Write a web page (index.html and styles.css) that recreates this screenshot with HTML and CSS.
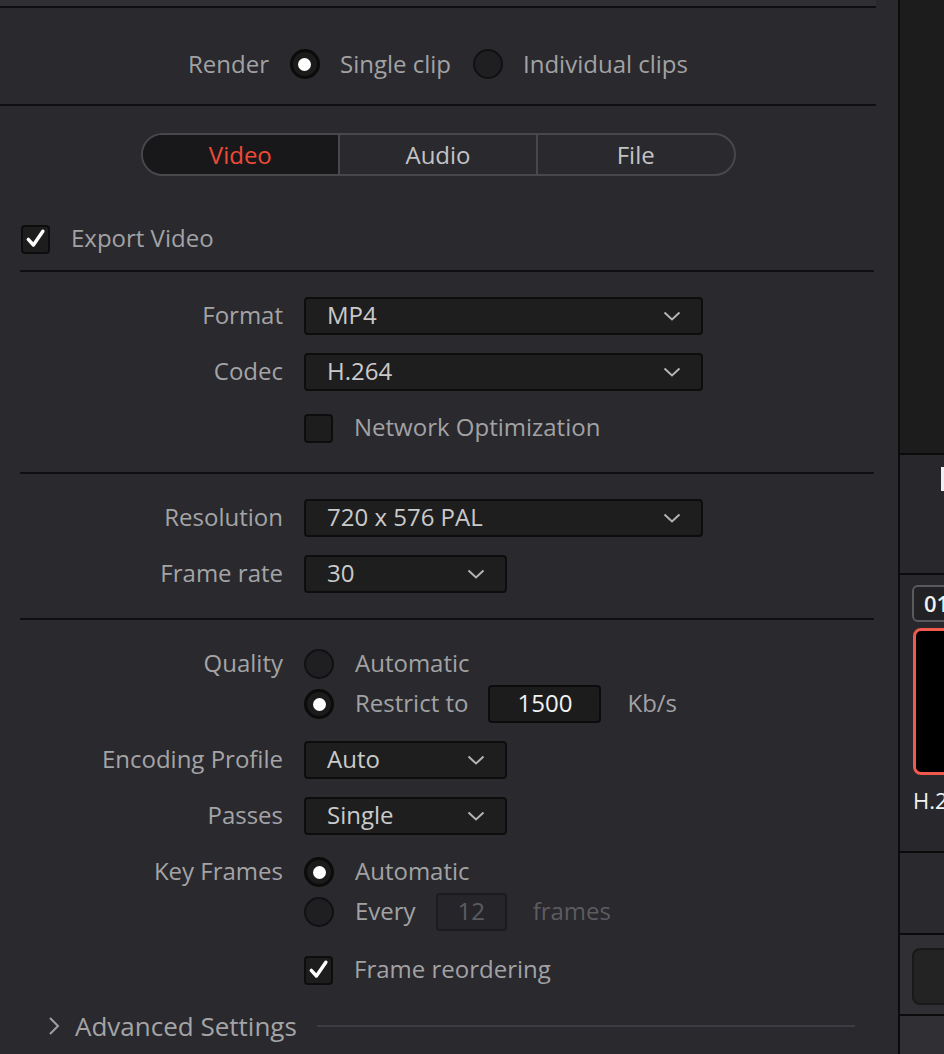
FILE: index.html
```html
<!DOCTYPE html>
<html>
<head>
<meta charset="utf-8">
<link rel="stylesheet" href="styles.css">
</head>
<body>
<div class="app">
  <div class="left">
    <div class="topstrip"></div>
    <div class="render-row">
      <span class="txt">Render</span>
      <span class="radio on"></span>
      <span class="txt">Single clip</span>
      <span class="radio"></span>
      <span class="txt">Individual clips</span>
    </div>
    <div class="tabs-wrap">
      <div class="tabs">
        <div class="tab active">Video</div>
        <div class="tab">Audio</div>
        <div class="tab">File</div>
      </div>
    </div>
    <div class="content">
      <div class="export-row">
        <span class="check on"><svg viewBox="0 0 28 28" width="24" height="24"><path d="M5 14.5 L11 21 L22 5" fill="none" stroke="#fff" stroke-width="4" stroke-linecap="round" stroke-linejoin="round"/></svg></span>
        <span class="txt">Export Video</span>
      </div>

      <div class="section">
        <div class="form">
          <div class="lbl">Format</div>
          <div class="select wide"><span class="val">MP4</span><svg class="chev" viewBox="0 0 18 10" width="18" height="10"><polyline points="1.5,1.5 9,8.5 16.5,1.5" fill="none" stroke="#b4b4b4" stroke-width="2"/></svg></div>
          <div class="lbl">Codec</div>
          <div class="select wide"><span class="val">H.264</span><svg class="chev" viewBox="0 0 18 10" width="18" height="10"><polyline points="1.5,1.5 9,8.5 16.5,1.5" fill="none" stroke="#b4b4b4" stroke-width="2"/></svg></div>
          <div class="lbl"></div>
          <div class="ctl"><span class="check"></span><span class="txt">Network Optimization</span></div>
        </div>
      </div>

      <div class="section">
        <div class="form">
          <div class="lbl">Resolution</div>
          <div class="select wide"><span class="val">720 x 576 PAL</span><svg class="chev" viewBox="0 0 18 10" width="18" height="10"><polyline points="1.5,1.5 9,8.5 16.5,1.5" fill="none" stroke="#b4b4b4" stroke-width="2"/></svg></div>
          <div class="lbl">Frame rate</div>
          <div class="select narrow"><span class="val">30</span><svg class="chev" viewBox="0 0 18 10" width="18" height="10"><polyline points="1.5,1.5 9,8.5 16.5,1.5" fill="none" stroke="#b4b4b4" stroke-width="2"/></svg></div>
        </div>
      </div>

      <div class="section last">
        <div class="form">
          <div class="lbl">Quality</div>
          <div class="group">
            <div class="ctl"><span class="radio"></span><span class="txt">Automatic</span></div>
            <div class="ctl"><span class="radio on"></span><span class="txt">Restrict to</span><span class="num"><span class="val">1500</span></span><span class="txt unit">Kb/s</span></div>
          </div>
          <div class="lbl">Encoding Profile</div>
          <div class="select narrow"><span class="val">Auto</span><svg class="chev" viewBox="0 0 18 10" width="18" height="10"><polyline points="1.5,1.5 9,8.5 16.5,1.5" fill="none" stroke="#b4b4b4" stroke-width="2"/></svg></div>
          <div class="lbl">Passes</div>
          <div class="select narrow"><span class="val">Single</span><svg class="chev" viewBox="0 0 18 10" width="18" height="10"><polyline points="1.5,1.5 9,8.5 16.5,1.5" fill="none" stroke="#b4b4b4" stroke-width="2"/></svg></div>
          <div class="lbl">Key Frames</div>
          <div class="group">
            <div class="ctl"><span class="radio on"></span><span class="txt">Automatic</span></div>
            <div class="ctl"><span class="radio"></span><span class="txt">Every</span><span class="num dim"><span class="val">12</span></span><span class="txt unit dimtxt">frames</span></div>
          </div>
          <div class="lbl"></div>
          <div class="ctl low"><span class="check on"><svg viewBox="0 0 28 28" width="24" height="24"><path d="M5 14.5 L11 21 L22 5" fill="none" stroke="#fff" stroke-width="4" stroke-linecap="round" stroke-linejoin="round"/></svg></span><span class="txt">Frame reordering</span></div>
        </div>
      </div>

      <div class="advanced">
        <svg class="adv-chev" viewBox="0 0 12 20" width="12" height="20"><polyline points="2,2 10,10 2,18" fill="none" stroke="#a0a0a0" stroke-width="2"/></svg>
        <span class="adv-txt">Advanced Settings</span>
        <span class="adv-line"></span>
      </div>
    </div>
  </div>

  <div class="right">
    <div class="r-top"></div>
    <div class="r-mid"><div class="r-mark"></div></div>
    <div class="r-clips">
      <div class="clip-num">01</div>
      <div class="clip-thumb"></div>
      <div class="clip-name">H.264</div>
    </div>
    <div class="r-blank"></div>
    <div class="r-btnrow"><div class="r-btn"></div></div>
    <div class="r-bottom"></div>
  </div>
</div>
</body>
</html>
```

FILE: styles.css
```css
* { box-sizing: border-box; }
html, body { margin: 0; padding: 0; }
body {
  background: #29292e;
  font-family: "Open Sans", "DejaVu Sans", sans-serif;
  font-size: 24px;
  color: #a2a2a4;
  width: 944px;
  height: 1054px;
  overflow: hidden;
}
.app { display: flex; width: 944px; height: 1054px; }
.left {
  width: 900px;
  flex: none;
  background: #29292e;
  border-right: 2px solid #0b0b0c;
}
.topstrip {
  width: 876px;
  height: 8px;
  background: #2f2f34;
  border-bottom: 2px solid #0f0f11;
}
.render-row {
  width: 876px;
  height: 98px;
  padding: 42px 0 26px;
  border-bottom: 2px solid #0f0f11;
  display: flex;
  justify-content: center;
  align-items: center;
}
.txt { white-space: nowrap; line-height: 28px; padding-bottom: 2px; }
.val { line-height: 28px; padding-bottom: 2px; }
.render-row .txt { padding-bottom: 0; }
.render-row .radio { margin: 0 20px 0 21px; }
.render-row .radio + .txt + .radio { margin-left: 22px; }

.radio {
  width: 30px;
  height: 30px;
  flex: none;
  border-radius: 50%;
  background: #1f1f21;
  border: 2px solid #111113;
  display: inline-flex;
  align-items: center;
  justify-content: center;
}
.radio.on { background: #1b1b1c; border: 3px solid #0b0b0b; }
.radio.on::after {
  content: "";
  width: 13px;
  height: 13px;
  border-radius: 50%;
  background: #fff;
}

.tabs-wrap { width: 876px; display: flex; justify-content: center; padding-top: 27px; }
.tabs {
  display: flex;
  width: 595px;
  height: 43px;
  border: 2px solid #47474c;
  border-radius: 22px;
  overflow: hidden;
}
.tab {
  flex: 1;
  display: flex;
  align-items: center;
  justify-content: center;
  color: #c3c3c5;
  line-height: 28px;
}
.tab + .tab { border-left: 2px solid #47474c; }
.tab.active { background: #18181a; color: #ef4a36; }

.content { padding-left: 20px; width: 874px; }
.export-row {
  display: flex;
  align-items: center;
  height: 96px;
  padding-top: 49px;
  padding-bottom: 17px;
  border-bottom: 2px solid #0f0f11;
}
.export-row .check { margin-left: 1px; margin-right: 21px; }

.check {
  width: 29px;
  height: 29px;
  flex: none;
  background: #1d1d1e;
  border: 2px solid #0d0d0e;
  border-radius: 4px;
  display: inline-flex;
  align-items: center;
  justify-content: center;
}
.check svg { display: block; }

.section {
  padding: 25px 0;
  border-bottom: 2px solid #0f0f11;
}
.section.last { border-bottom: none; padding-bottom: 22px; }
.form {
  display: grid;
  grid-template-columns: 263px 1fr;
  column-gap: 21px;
  row-gap: 18px;
  align-items: start;
}
.lbl {
  text-align: right;
  height: 38px;
  line-height: 36px;
  color: #a4a4a6;
  white-space: nowrap;
}
.select {
  height: 38px;
  background: #1e1e1f;
  border: 2px solid #0d0d0e;
  border-radius: 4px;
  display: flex;
  align-items: center;
  justify-content: space-between;
  padding: 0 20px 0 21px;
  color: #cacaca;
}
.select.wide { width: 399px; }
.select.narrow { width: 203px; }
.chev { display: block; }

.ctl {
  height: 38px;
  display: flex;
  align-items: center;
}
.ctl.low { margin-top: 2px; }
.ctl .txt { margin-left: 21px; }
.group { display: flex; flex-direction: column; gap: 2px; }
.num {
  margin-left: 20px;
  width: 113px;
  height: 38px;
  background: #1c1c1d;
  border: 2px solid #0c0c0d;
  border-radius: 4px;
  color: #f2f2f2;
  display: flex;
  align-items: center;
  justify-content: center;
}
.num.dim {
  width: 71px;
  background: #26262a;
  border-color: #1c1c1f;
  color: #5c5c60;
}
.ctl .unit { margin-left: 26px; }
.ctl .dimtxt { color: #5c5c60; }

.advanced {
  display: flex;
  align-items: center;
  height: 30px;
  padding-left: 28px;
}
.adv-chev { display: block; margin-right: 15px; }
.adv-txt { font-size: 26px; color: #a4a4a6; white-space: nowrap; line-height: 30px; }
.adv-line {
  height: 2px;
  background: #3c3c42;
  width: 538px;
  margin-left: 20px;
}

.right {
  width: 44px;
  flex: none;
  overflow: hidden;
  display: flex;
  flex-direction: column;
}
.r-top { height: 455px; background: #1c1c1c; border-bottom: 2px solid #0b0b0c; flex: none; }
.r-mid { height: 120px; background: #27272c; border-bottom: 2px solid #0b0b0c; flex: none; padding-top: 12px; }
.r-mark { width: 3px; height: 24px; background: #f0f0f0; margin-left: 41px; }
.r-clips { height: 278px; background: #27272c; border-bottom: 2px solid #0b0b0c; flex: none; padding-left: 12px; padding-top: 10px; }
.clip-num {
  width: 60px;
  height: 37px;
  border: 2px solid #5a5a5e;
  border-radius: 6px;
  background: #222224;
  color: #f0f0f0;
  font-size: 22px;
  line-height: 33px;
  padding-left: 10px;
  font-weight: 600;
}
.clip-thumb {
  margin-top: 6px;
  width: 80px;
  height: 147px;
  border: 3px solid #f05a4c;
  border-radius: 8px;
  background: #000;
  margin-left: 1px;
}
.clip-name { color: #f2f2f2; font-size: 22px; margin-top: 10px; margin-left: 1px; line-height: 30px; white-space: nowrap; }
.r-blank { height: 82px; background: #29292e; border-bottom: 2px solid #0b0b0c; flex: none; }
.r-btnrow { height: 81px; background: #2f2f34; border-bottom: 2px solid #0b0b0c; flex: none; padding: 13px 0 0 12px; }
.r-btn { width: 80px; height: 57px; background: #232324; border: 2px solid #19191a; border-radius: 8px; }
.r-bottom { flex: 1; background: #2f2f34; }
```
